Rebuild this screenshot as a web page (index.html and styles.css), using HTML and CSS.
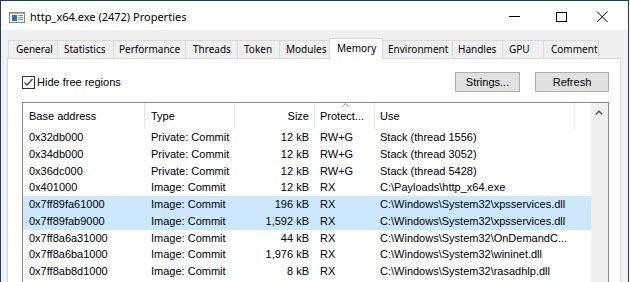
FILE: index.html
```html
<!DOCTYPE html>
<html>
<head>
<meta charset="utf-8">
<link rel="stylesheet" href="styles.css">
</head>
<body>
<div class="window">
  <div class="titlebar">
    <svg class="app-icon" width="16" height="11" viewBox="0 0 16 11">
      <rect x="0.5" y="0.5" width="15" height="10" fill="#fff" stroke="#8a8a8a"/>
      <rect x="1" y="1" width="14" height="1" fill="#b0b0b0"/>
      <rect x="3" y="3" width="5" height="6" fill="#1a73d9"/>
      <rect x="9" y="3" width="5" height="1" fill="#8a8a8a"/>
      <rect x="9" y="5" width="5" height="1" fill="#8a8a8a"/>
      <rect x="9" y="7" width="5" height="1" fill="#8a8a8a"/>
    </svg>
    <span class="title">http_x64.exe (2472) Properties</span>
    <div class="caption">
      <svg class="cap-min" width="11" height="11" viewBox="0 0 11 11"><rect x="0" y="5" width="11" height="1" fill="#000"/></svg>
      <svg class="cap-max" width="11" height="10" viewBox="0 0 11 10"><rect x="0.5" y="0.5" width="10" height="9" fill="none" stroke="#000"/></svg>
      <svg class="cap-close" width="13" height="11" viewBox="0 0 13 11"><path d="M1 0.5 L11.5 11 M11.5 0.5 L1 11" stroke="#000" stroke-width="1" fill="none"/></svg>
    </div>
  </div>
  <div class="client">
    <div class="tabs">
      <div class="tab t-general">General</div>
      <div class="tab t-statistics">Statistics</div>
      <div class="tab t-performance">Performance</div>
      <div class="tab t-threads">Threads</div>
      <div class="tab t-token">Token</div>
      <div class="tab t-modules">Modules</div>
      <div class="tab tab-active t-memory">Memory</div>
      <div class="tab t-environment">Environment</div>
      <div class="tab t-handles">Handles</div>
      <div class="tab t-gpu">GPU</div>
      <div class="tab t-comment">Comment</div>
    </div>
    <div class="panel">
      <div class="toolbar">
        <label class="check">
          <span class="box"><svg width="11" height="11" viewBox="0 0 11 11"><path d="M1.5 5.5 L4 8 L9.5 2" stroke="#444" stroke-width="1.3" fill="none"/></svg></span>
          <span class="check-label">Hide free regions</span>
        </label>
        <div class="spacer"></div>
        <button class="btn btn-strings">Strings...</button>
        <button class="btn btn-refresh">Refresh</button>
      </div>
      <div class="list">
        <div class="list-main">
          <div class="row header">
            <div class="cell">Base address</div>
            <div class="cell">Type</div>
            <div class="cell right">Size</div>
            <div class="cell sorted">Protect...<svg class="sort-arrow" width="7" height="4" viewBox="0 0 7 4"><path d="M0.5 3.5 L3.5 0.5 L6.5 3.5" stroke="#9a9a9a" fill="none"/></svg></div>
            <div class="cell">Use</div>
            <div class="cell filler"></div>
          </div>
          <div class="row"><div class="cell">0x32db000</div><div class="cell">Private: Commit</div><div class="cell right">12 kB</div><div class="cell">RW+G</div><div class="cell">Stack (thread 1556)</div><div class="cell"></div></div>
          <div class="row"><div class="cell">0x34db000</div><div class="cell">Private: Commit</div><div class="cell right">12 kB</div><div class="cell">RW+G</div><div class="cell">Stack (thread 3052)</div><div class="cell"></div></div>
          <div class="row"><div class="cell">0x36dc000</div><div class="cell">Private: Commit</div><div class="cell right">12 kB</div><div class="cell">RW+G</div><div class="cell">Stack (thread 5428)</div><div class="cell"></div></div>
          <div class="row"><div class="cell">0x401000</div><div class="cell">Image: Commit</div><div class="cell right">12 kB</div><div class="cell">RX</div><div class="cell">C:\Payloads\http_x64.exe</div><div class="cell"></div></div>
          <div class="row selected"><div class="cell">0x7ff89fa61000</div><div class="cell">Image: Commit</div><div class="cell right">196 kB</div><div class="cell">RX</div><div class="cell">C:\Windows\System32\xpsservices.dll</div><div class="cell"></div></div>
          <div class="row selected"><div class="cell">0x7ff89fab9000</div><div class="cell">Image: Commit</div><div class="cell right">1,592 kB</div><div class="cell">RX</div><div class="cell">C:\Windows\System32\xpsservices.dll</div><div class="cell"></div></div>
          <div class="row"><div class="cell">0x7ff8a6a31000</div><div class="cell">Image: Commit</div><div class="cell right">44 kB</div><div class="cell">RX</div><div class="cell">C:\Windows\System32\OnDemandC...</div><div class="cell"></div></div>
          <div class="row"><div class="cell">0x7ff8a6ba1000</div><div class="cell">Image: Commit</div><div class="cell right">1,976 kB</div><div class="cell">RX</div><div class="cell">C:\Windows\System32\wininet.dll</div><div class="cell"></div></div>
          <div class="row"><div class="cell">0x7ff8ab8d1000</div><div class="cell">Image: Commit</div><div class="cell right">8 kB</div><div class="cell">RX</div><div class="cell">C:\Windows\System32\rasadhlp.dll</div><div class="cell"></div></div>
        </div>
        <div class="scrollbar">
          <svg class="scroll-up" width="8" height="5" viewBox="0 0 8 5"><path d="M0.8 4.5 L4 1.2 L7.2 4.5" stroke="#606060" stroke-width="1.6" fill="none"/></svg>
        </div>
      </div>
    </div>
  </div>
</div>
</body>
</html>
```
FILE: styles.css
```css
* { box-sizing: border-box; }
html, body { margin: 0; padding: 0; background: #fff; }
body { width: 630px; height: 282px; overflow: hidden; }

.window {
  width: 629px;
  height: 282px;
  border: 1px solid #1f3d63;
  border-bottom: none;
  display: flex;
  flex-direction: column;
  overflow: hidden;
  background: #f0f0f0;
}

.titlebar {
  height: 29px;
  flex: none;
  background: #fff;
  display: flex;
  align-items: center;
  font-family: "Noto Sans", "Open Sans", sans-serif;
  font-size: 11px;
  color: #000;
}
.app-icon { margin-left: 8px; margin-top: 3px; flex: none; }
.title { margin-left: 5px; margin-top: 1px; }
.caption { margin-left: auto; display: flex; align-items: center; margin-right: 19px; margin-top: 2px; }
.cap-min { margin-right: 36px; }
.cap-max { margin-right: 29px; }

.client {
  flex: 1;
  padding-top: 8px;
  display: flex;
  flex-direction: column;
}

.tabs {
  height: 20px;
  display: flex;
  align-items: flex-end;
  padding-left: 7px;
  font-family: "Noto Sans", "Open Sans", sans-serif;
  font-size: 10px;
  color: #000;
}
.tab {
  height: 18px;
  line-height: 17px;
  border: 1px solid #d9d9d9;
  border-bottom: none;
  background: #f0f0f0;
  padding-left: 6px;
  margin-right: -1px;
  white-space: nowrap;
  flex: none;
}
.tab-active {
  height: 21px;
  line-height: 19px;
  background: #fff;
  margin-bottom: -1px;
  position: relative;
  z-index: 1;
}
.t-general { width: 50px; padding-left: 7px; }
.t-statistics { width: 57px; }
.t-performance { width: 73px; padding-left: 5px; }
.t-threads { width: 53px; padding-left: 7px; }
.t-token { width: 43px; }
.t-modules { width: 51px; }
.t-memory { width: 54px; padding-left: 7px; }
.t-environment { width: 71px; padding-left: 5px; }
.t-handles { width: 51px; padding-left: 5px; }
.t-gpu { width: 42px; }
.t-comment { width: 56px; padding-left: 7px; }

.panel {
  flex: 1;
  margin-left: 6px;
  width: 614px;
  border: 1px solid #d9d9d9;
  border-bottom: none;
  background: #fff;
  padding: 13px 11px 0 14px;
  font-family: "Liberation Sans", Arial, sans-serif;
  font-size: 11px;
  color: #000;
  display: flex;
  flex-direction: column;
}

.toolbar {
  height: 20px;
  display: flex;
  align-items: center;
}
.check { display: flex; align-items: center; }
.box {
  width: 13px;
  height: 13px;
  border: 1px solid #333;
  background: #fff;
  display: flex;
  align-items: center;
  justify-content: center;
  margin-top: 1px;
}
.check-label { margin-left: 2px; }
.spacer { flex: 1; }
.btn {
  height: 20px;
  border: 1px solid #adadad;
  background: #e1e1e1;
  font-family: "Liberation Sans", Arial, sans-serif;
  font-size: 11px;
  color: #000;
  padding: 0;
  margin: 0;
}
.btn-strings { width: 65px; margin-right: 15px; }
.btn-refresh { width: 74px; }

.list {
  margin-top: 10px;
  flex: 1;
  border: 1px solid #828790;
  border-bottom: none;
  display: flex;
  overflow: hidden;
}
.list-main { width: 568px; flex: none; }
.scrollbar {
  width: 17px;
  flex: none;
  background: #f0f0f0;
  padding: 7px 0 0 4px;
}
.scroll-up { display: block; }

.row {
  display: grid;
  grid-template-columns: 122px 90px 80px 60px 200px 16px;
  height: 16.75px;
  line-height: 16.75px;
  white-space: nowrap;
}
.row .cell { padding-left: 6px; overflow: hidden; }
.row .cell:nth-child(4), .row .cell:nth-child(5) { padding-left: 5px; }
.row .cell.right { text-align: right; padding-left: 0; padding-right: 6px; }
.row.selected { background: #cce8ff; }

.row.header { height: 26px; line-height: 26px; }
.row.header .cell { border-right: 1px solid #e5e5e5; }
.row.header .cell.right { padding-right: 5px; }
.row.header .cell.filler { border-right: none; }
.sorted { position: relative; }
.sort-arrow { position: absolute; left: 27px; top: 0; }
```
